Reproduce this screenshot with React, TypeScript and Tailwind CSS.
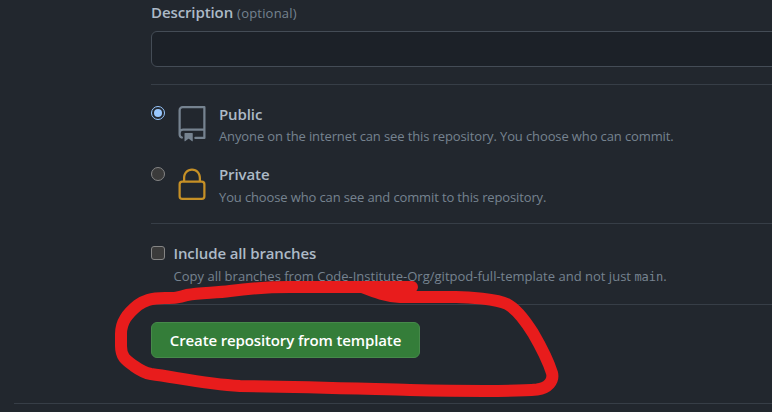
import type { ReactNode } from 'react';

function RepoIcon() {
  return (
    <svg viewBox="0 0 24 24" className="size-9 shrink-0 fill-[#768390]" aria-hidden="true">
      <path
        fillRule="evenodd"
        d="M3 2.75A2.75 2.75 0 015.75 0h14.5a.75.75 0 01.75.75v20.5a.75.75 0 01-.75.75h-6a.75.75 0 010-1.5h5.25v-4H6A1.5 1.5 0 004.5 18v.75c0 .716.43 1.334 1.05 1.605a.75.75 0 01-.6 1.374A3.25 3.25 0 013 18.75v-16zM19.5 1.5V15H6c-.546 0-1.059.146-1.5.401V2.75c0-.69.56-1.25 1.25-1.25H19.5z"
      />
      <path d="M7 18.25a.25.25 0 01.25-.25h5a.25.25 0 01.25.25v5.01a.25.25 0 01-.397.201l-2.206-1.604a.25.25 0 00-.294 0L7.397 23.46a.25.25 0 01-.397-.2v-5.01z" />
    </svg>
  );
}

function LockIcon() {
  return (
    <svg viewBox="0 0 24 24" className="size-9 shrink-0 fill-[#c69026]" aria-hidden="true">
      <path
        fillRule="evenodd"
        d="M6 9V7.25C6 3.845 8.503 1 12 1s6 2.845 6 6.25V9h.5a2.5 2.5 0 012.5 2.5v8a2.5 2.5 0 01-2.5 2.5h-13A2.5 2.5 0 013 19.5v-8A2.5 2.5 0 015.5 9H6zm1.5-1.75C7.5 4.58 9.422 2.5 12 2.5c2.578 0 4.5 2.08 4.5 4.75V9h-9V7.25zm-3 4.25a1 1 0 011-1h13a1 1 0 011 1v8a1 1 0 01-1 1h-13a1 1 0 01-1-1v-8z"
      />
    </svg>
  );
}

function Radio({ checked }: { checked: boolean }) {
  return checked ? (
    <span role="radio" aria-checked="true" className="flex size-3.5 shrink-0 items-center justify-center rounded-full border border-[#99c8ff] bg-[#22272e]">
      <span className="size-2 rounded-full bg-[#99c8ff]" />
    </span>
  ) : (
    <span role="radio" aria-checked="false" className="block size-3.5 shrink-0 rounded-full border border-[#858585] bg-[#3b3b3b]" />
  );
}

function Visibility({ checked, icon, title, note }: { checked: boolean; icon: ReactNode; title: ReactNode; note: ReactNode }) {
  return (
    <div className="flex h-[61px] items-start">
      <Radio checked={checked} />
      <div className="ml-[9px]">{icon}</div>
      <div className="ml-[9px] whitespace-nowrap">
        {title}
        {note}
      </div>
    </div>
  );
}

export default function App() {
  return (
    <div className="relative h-[412px] w-[772px] overflow-hidden bg-[#22272e] font-['Open_Sans','Noto_Sans',sans-serif] text-[13px] text-[#768390]">
      <main className="ml-[151px] h-[403px]">
        <label className="flex h-[31px] items-baseline whitespace-nowrap pt-px leading-[22px]">
          <span className="text-[15px] font-semibold tracking-[-0.1px] text-[#adbac7]">Description</span>
          <span className="ml-1 tracking-[0.2px]">(optional)</span>
        </label>
        <div className="h-9 w-[640px] rounded-md border border-[#444c56] bg-[#1c2128]" />
        <hr className="mt-[17px] border-[#373e47]" />

        <div className="pt-[21px]" role="radiogroup">
          <Visibility
            checked
            icon={<RepoIcon />}
            title={<div className="-mt-[3px] text-[15px] leading-[22px] font-semibold tracking-[-0.1px] text-[#adbac7]">Public</div>}
            note={<div className="leading-[22px] tracking-[-0.12px]">Anyone on the internet can see this repository. You choose who can commit.</div>}
          />
          <Visibility
            checked={false}
            icon={<LockIcon />}
            title={<div className="-mt-1 text-[15px] leading-[22px] font-semibold tracking-[-0.1px] text-[#adbac7]">Private</div>}
            note={<div className="pt-px leading-[22px] tracking-[-0.13px]">You choose who can see and commit to this repository.</div>}
          />
        </div>

        <hr className="-mt-[5px] border-[#373e47]" />
        <div className="flex h-20 items-start pt-[18px] whitespace-nowrap">
          <span role="checkbox" aria-checked="false" className="mt-1 size-3.5 shrink-0 rounded-[3px] border border-[#858585] bg-[#3b3b3b]" />
          <div className="ml-[8.5px]">
            <div className="text-[15px] leading-[22px] font-semibold tracking-[-0.12px] text-[#adbac7]">Include all branches</div>
            <div className="pt-px leading-[22px] tracking-[0.01px]">
              Copy all branches from Code-Institute-Org/gitpod-full-template and not just{' '}
              <span className="font-['DejaVu_Sans_Mono',monospace] text-[12px]">main</span>.
            </div>
          </div>
        </div>
        <hr className="border-[#373e47]" />
        <button className="mt-[17px] flex h-9 w-[269px] items-center justify-center rounded-md border border-[#46894a] bg-[#347d39] text-[15px] font-semibold tracking-[-0.13px] whitespace-nowrap text-white">
          Create repository from template
        </button>
      </main>
      <footer className="ml-3.5 border-t border-[#373e47]" />

      <svg viewBox="0 0 772 412" className="pointer-events-none absolute inset-0 h-[412px] w-[772px]" aria-hidden="true">
        <path
          d="M412 287 H290 C260 287 245 289 230 291 C215 293 200 292.500 187 295 C178 298 174 298 165 298 C150 298 144 301 138 305 C127 314 121 322 121 334 V346 C121 358 127 361 134 366 C141 371 145 373 151 374 C175 377 205 384 240 386 C310 387 370 389 410 390 C460 391 520 391 537 389.500 C548 388 554 381 552 373 C547 357 540 345 533 333 C523 317 515 308 507 304 C497 299 468 297 456 297 H400 C385 296 375 292 362 287"
          fill="none"
          stroke="#e81c1c"
          strokeWidth="12"
          strokeLinecap="round"
          strokeLinejoin="round"
        />
      </svg>
    </div>
  );
}
